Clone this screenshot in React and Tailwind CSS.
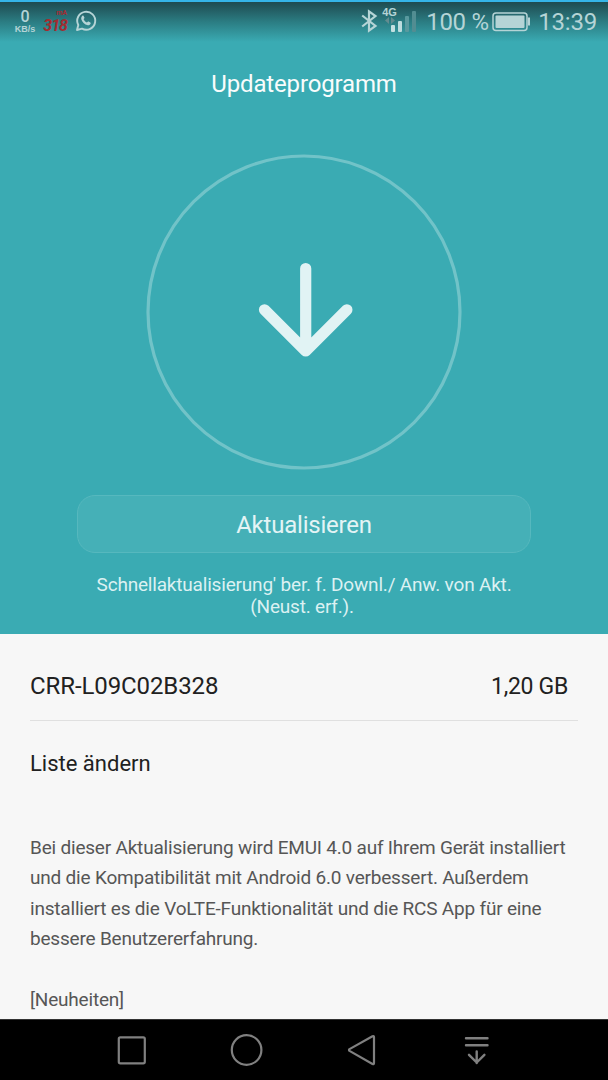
// Huawei system update screen
const changelog = [
  'Bei dieser Aktualisierung wird EMUI 4.0 auf Ihrem Gerät installiert',
  'und die Kompatibilität mit Android 6.0 verbessert. Außerdem',
  'installiert es die VoLTE-Funktionalität und die RCS App für eine',
  'bessere Benutzererfahrung.',
]

function WhatsAppIcon() {
  return (
    <svg width="22" height="22" viewBox="0 0 22 22" className="ml-[8px] mt-[8px] shrink-0">
      <path
        d="M2 20l1.300-5A9 9 0 1 1 7 18.700z"
        fill="none"
        stroke="#b5d4d6"
        strokeWidth="1.900"
        strokeLinejoin="round"
      />
      <path
        d="M7.300 5.800c.4-.4 1-.3 1.300.2l.8 1.600c.2.400 0 .8-.8 1.600.7 1.500 1.800 2.600 3.400 3.300.8-1 1.200-1.200 1.600-1l1.700.9c.5.3.5.800.3 1.300-.4 1-1.600 1.700-2.800 1.500-3.400-.7-5.700-3-6.500-6-.3-1.300.2-2.600 1-3.400z"
        fill="#b5d4d6"
      />
    </svg>
  )
}

function StatusIcons() {
  return (
    <svg width="56" height="42" viewBox="0 0 56 42" className="shrink-0">
      {/* bluetooth */}
      <path d="M2.200 15.500l13.300 10.500-6.500 4.700V11.300l6.500 4.700-13.300 10.500" fill="none" stroke="#b5d4d6" strokeWidth="2.200" />
      {/* signal */}
      <path d="M29 17v7l-4-3.500zM31 17v7l4-3.500z" fill="#628c90" />
      <rect x="31" y="25" width="4" height="7" rx="1" fill="#c3e0e1" />
      <rect x="38" y="21" width="4" height="11" rx="1" fill="#bddcde" />
      <rect x="45" y="16" width="4" height="16" rx="1" fill="#59999e" />
      <rect x="52" y="11" width="4" height="21" rx="1" fill="#528d92" />
    </svg>
  )
}

function StatusBar() {
  return (
    <div className="flex h-[42px] shrink-0 items-start border-t-2 border-[#35b5e8] bg-linear-to-b from-[#1e4b50] via-[#2b7d83] to-[#3aabb3] pl-[14px] text-[#b5d4d6]">
      <div className="flex w-[22px] flex-col items-center">
        <span className="mt-[6px] text-[16px] leading-[17px] font-medium">0</span>
        <span className="font-['Liberation_Sans',sans-serif] text-[9px] leading-[9px] font-bold whitespace-nowrap">KB/s</span>
      </div>
      <div className="ml-[9px] flex w-[22px] flex-col items-end text-[#a32b30]">
        <span className="mt-[8px] text-[7px] leading-[7px] font-bold">mA</span>
        <span className="text-[16px] leading-[17px] font-bold italic tracking-[-1px] whitespace-nowrap">318</span>
      </div>
      <WhatsAppIcon />
      <div className="relative ml-auto -mt-[2px]">
        <StatusIcons />
        <span className="absolute top-[7px] left-[22px] font-['Liberation_Sans',sans-serif] text-[11px] leading-[11px] font-bold">4G</span>
      </div>
      <span className="ml-[10px] w-[66px] text-[24px] leading-[40px] tracking-[-0.3px] whitespace-nowrap">100 %</span>
      <svg width="38" height="42" viewBox="0 0 38 42" className="-mt-[2px] shrink-0">
        <rect x="1" y="13" width="34" height="17.500" rx="3" fill="none" stroke="#b5d4d6" strokeWidth="1.500" />
        <rect x="3.500" y="15.500" width="29" height="12.500" rx="1" fill="#b5d4d6" />
        <path d="M36 17.500h2v8h-2z" fill="#b5d4d6" />
      </svg>
      <span className="mr-[11px] ml-[8px] text-[24px] leading-[40px] tracking-[-0.2px]">13:39</span>
    </div>
  )
}

function NavBar() {
  return (
    <div className="flex h-[61px] shrink-0 items-center gap-[75px] border-t border-[#333333] bg-black pl-[112px]">
      <svg width="40" height="60" viewBox="0 0 40 60" fill="none" stroke="#808080" strokeWidth="2.200" className="shrink-0">
        <rect x="6.800" y="17.300" width="26" height="26" rx="1.500" />
      </svg>
      <svg width="40" height="60" viewBox="0 0 40 60" fill="none" stroke="#808080" strokeWidth="2.200" className="shrink-0">
        <circle cx="19.600" cy="30" r="14.800" />
      </svg>
      <svg width="40" height="60" viewBox="0 0 40 60" fill="none" stroke="#808080" strokeWidth="2.200" strokeLinejoin="round" className="shrink-0">
        <path d="M7.500 29.100L30.500 16.200q1.500-.5 1.500 1v25.800q0 1.500-1.500 1L7.500 30.900q-1-.9 0-1.800z" />
      </svg>
      <svg width="28" height="60" viewBox="0 0 28 60" fill="none" stroke="#808080" strokeWidth="2.400" strokeLinecap="round" strokeLinejoin="round" className="ml-[5px] shrink-0">
        <path d="M4 18.200h21.500M4 25.200h21.500M14.700 31.500v11.500M7 34.800L14.700 42.500l7.700-7.700" />
      </svg>
    </div>
  )
}

export default function App() {
  return (
    <div className="flex h-[1080px] w-[608px] flex-col overflow-hidden bg-[#f7f7f7] font-['Roboto',sans-serif]">
      <div className="flex h-[634px] shrink-0 flex-col bg-[#3aabb3]">
        <StatusBar />
        <h1 className="mt-[26px] text-center text-[24px] leading-[32px] tracking-[-0.15px] text-[#f8fcfc]">Updateprogramm</h1>

        {/* download indicator */}
        <svg width="316" height="316" viewBox="0 0 316 316" className="mt-[54px] ml-[146px] shrink-0" fill="none">
          <circle cx="158" cy="158" r="156" stroke="#71c3c8" strokeWidth="3.200" />
          <path
            d="M159.700 114.500V196M118.500 155.800l41.200 41.200 41.200-41.200"
            stroke="#e1f3f4"
            strokeWidth="11.200"
            strokeLinecap="round"
            strokeLinejoin="round"
          />
        </svg>

        <button className="mx-auto mt-[25px] h-[58px] w-[454px] shrink-0 rounded-[18px] border border-[#56b8be] bg-[#45b0b7] pt-[2px] text-[24px] tracking-[-0.22px] text-[#e3f4f5]">
          Aktualisieren
        </button>
        <p className="mt-[21px] text-center text-[19px] leading-[22px] tracking-[-0.19px] text-[#dcf1f2]">
          Schnellaktualisierung' ber. f. Downl./ Anw. von Akt.
          <br />
          <span className="mr-[4px]">(Neust. erf.).</span>
        </p>
      </div>

      <div className="flex min-h-0 flex-1 flex-col overflow-hidden pr-[30px] pl-[30px]">
        <div className="flex h-[87px] shrink-0 items-center justify-between border-b border-[#e0e0e0] pt-[18px] pr-[10px] text-[#212121]">
          <span className="text-[24px] tracking-[-0.1px]">CRR-L09C02B328</span>
          <span className="pt-[2px] text-[23px] tracking-[-0.3px]">1,20 GB</span>
        </div>
        <h2 className="mt-[27px] text-[22px] leading-[32px] text-[#212121]">Liste ändern</h2>
        <div className="mt-[53px] text-[19px] leading-[30.400px] tracking-[-0.2px] whitespace-nowrap text-[#565656]">
          {changelog.map((line) => (
            <p key={line}>{line}</p>
          ))}
          <p className="mt-[30px]">[Neuheiten]</p>
        </div>
      </div>

      <NavBar />
    </div>
  )
}
